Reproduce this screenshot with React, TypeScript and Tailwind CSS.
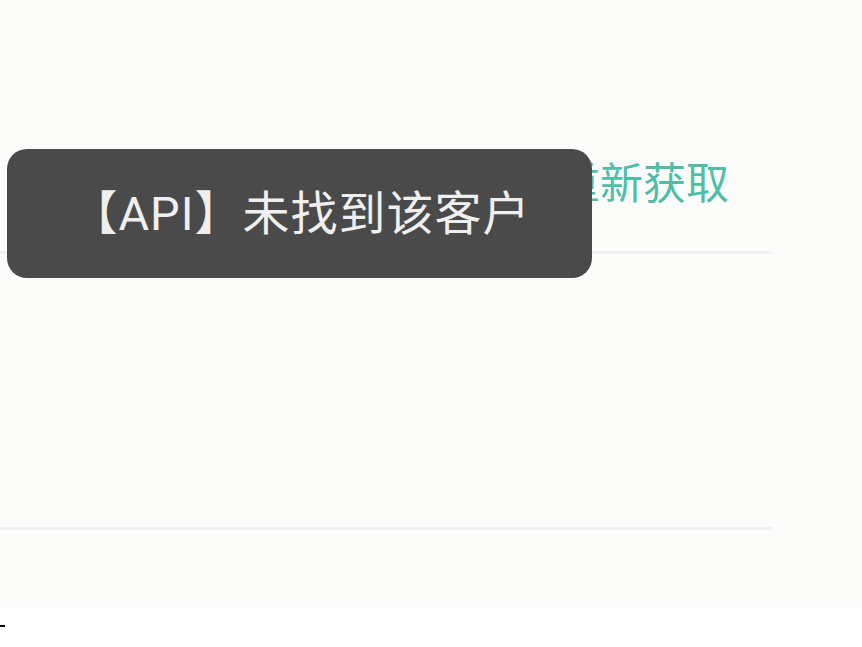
import React from "react";

export default function App() {
  return (
    <div
      className="relative w-[862px] h-[647px] overflow-hidden bg-white"
      style={{ fontFamily: 'Roboto, "Noto Sans CJK SC", "Noto Sans", sans-serif' }}
    >
      <div className="h-[607px] bg-[#fcfdfb]">
        <div className="w-[772px]">
          <div className="h-[254px] flex items-start justify-end pt-[158px] pr-[43px] border-b-[3px] border-[#f1f1f1]">
            <span className="text-[43px] font-normal leading-[52px] text-[#4fbea6]">重新获取</span>
          </div>
          <div className="h-[276px] border-b-[3px] border-[#f1f1f1]" />
        </div>
      </div>
      <div className="mt-[18px] w-[5px] h-[2px] bg-black" />

      <div className="absolute left-[7px] top-[149px] w-[585px] h-[129px] rounded-[20px] bg-[#4a4a4a] flex items-center justify-center pl-[2px]">
        <span className="text-[47px] font-normal leading-[56px] tracking-[1px] text-[#efefef]">【API】未找到该客户</span>
      </div>
    </div>
  );
}
